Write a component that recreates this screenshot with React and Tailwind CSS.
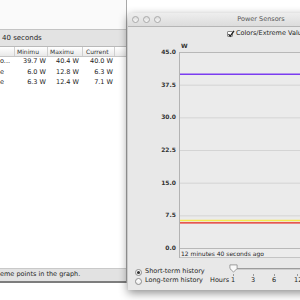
import React from "react";

const rows = [
  { name: "o...", min: "39.7 W", max: "40.4 W", cur: "40.0 W" },
  { name: "e", min: "6.0 W", max: "12.8 W", cur: "6.3 W" },
  { name: "e", min: "6.3 W", max: "12.4 W", cur: "7.1 W" },
];

const yLabels = ["45.0", "37.5", "30.0", "22.5", "15.0", "7.5", "0.0"];
const STEP = 196 / 6;

const BackWindow = () => {
  return (
    <div className="absolute left-0 top-0 w-[127px] h-[283px] flex flex-col bg-white border-r border-[#a8a8a8]">
      <div className="h-[30px] bg-[#fafafa] border-b border-[#c4c4c4]" />
      <div className="h-[17px] flex items-center pl-[2px] bg-[#e3e3e3] border-b border-[#b9b9b9] text-[7px]">
        40 seconds
      </div>
      <div className="h-[10px] flex items-center bg-gradient-to-b from-white to-[#e9e9e9] border-b border-[#c6c6c6] text-[6px] text-[#333]">
        <div className="w-[15px] h-full border-r border-[#cfcfcf]" />
        <div className="w-[33px] h-full pl-[2px] flex items-center border-r border-[#cfcfcf]">Minimu</div>
        <div className="w-[35px] h-full pl-[2px] flex items-center border-r border-[#cfcfcf]">Maximu</div>
        <div className="w-[32px] h-full pl-[3px] flex items-center border-r border-[#cfcfcf]">Current</div>
      </div>
      {rows.map((r, i) => (
        <div key={i} className="h-[10.5px] flex items-center text-[6.5px]">
          <div className="w-[15px]">{r.name}</div>
          <div className="w-[31px] text-right">{r.min}</div>
          <div className="w-[33px] text-right">{r.max}</div>
          <div className="w-[34px] text-right">{r.cur}</div>
        </div>
      ))}
      <div className="flex-1" />
      <div className="h-[13px] flex items-center bg-[#e2e2e2] border-t border-[#c9c9c9] text-[6.5px] whitespace-nowrap">
        eme points in the graph.
      </div>
      <div className="h-[2px] bg-[#7d7d7d]" />
    </div>
  );
};

const Chart = () => {
  const w = 214;
  const h = 197;
  const yOf = (v) => 196.5 - (v / 7.5) * STEP;
  return (
    <svg width={w} height={h} className="block">
      <rect x="0" y="0" width={w} height={h} fill="#ebebeb" />
      {[0, 1, 2, 3, 4, 5, 6].map((i) => (
        <line
          key={i}
          x1="0"
          x2={w}
          y1={i * STEP + 0.5}
          y2={i * STEP + 0.5}
          stroke={i === 0 || i === 6 ? "#b8b8b8" : "#d4d4d4"}
          strokeWidth="1"
        />
      ))}
      <line x1="0" x2={w} y1={yOf(40)} y2={yOf(40)} stroke="#7b3cf0" strokeWidth="1.6" />
      <line x1="0" x2={w} y1={yOf(6.3) - 0.6} y2={yOf(6.3) - 0.6} stroke="#f6e84e" strokeWidth="1.6" />
      <line x1="0" x2={w} y1={yOf(6.0) + 0.6} y2={yOf(6.0) + 0.6} stroke="#e5231b" strokeWidth="1.2" />
    </svg>
  );
};

const Radio = ({ checked, label }) => (
  <div className="flex items-center gap-[3px] h-[8px]">
    <span className="w-[7px] h-[7px] rounded-full bg-gradient-to-b from-white to-[#ececec] border border-[#8e8e8e] flex items-center justify-center">
      {checked && <span className="w-[3px] h-[3px] rounded-full bg-[#333]" />}
    </span>
    {label}
  </div>
);

const PowerSensors = () => {
  return (
    <div className="absolute left-[128px] top-[13px] w-[266px] h-[277px] flex flex-col bg-[#e8e8e8] rounded-t-[4px] shadow-[0_3px_10px_rgba(0,0,0,0.45)] overflow-hidden">
      <div className="relative h-[14px] shrink-0 flex items-center justify-center bg-gradient-to-b from-[#eeeeee] to-[#dcdcdc] border-b border-[#b5b5b5]">
        <div className="absolute left-[4px] top-[3px] flex gap-[4px]">
          <span className="w-[7px] h-[7px] rounded-full bg-gradient-to-b from-[#dcdcdc] to-[#f6f6f6] border border-[#a9a9a9]" />
          <span className="w-[7px] h-[7px] rounded-full bg-gradient-to-b from-[#dcdcdc] to-[#f6f6f6] border border-[#a9a9a9]" />
          <span className="w-[7px] h-[7px] rounded-full bg-gradient-to-b from-[#dcdcdc] to-[#f6f6f6] border border-[#a9a9a9]" />
        </div>
        <span className="text-[6.5px] text-[#555]">Power Sensors</span>
      </div>
      <div className="h-[14px] shrink-0 flex items-center pl-[99px] gap-[3px] text-[6.5px] whitespace-nowrap">
        <span className="relative w-[6px] h-[6px] bg-white border border-[#8a8a8a] rounded-[1px]">
          <svg viewBox="0 0 8 8" className="absolute -left-[1px] -top-[2px] w-[8px] h-[8px]">
            <path d="M1.5 4.2 L3.2 6.2 L7 0.8" fill="none" stroke="#222" strokeWidth="1.3" />
          </svg>
        </span>
        <span>Colors/Extreme Values</span>
      </div>
      <div className="flex pl-[53px] h-[11px] shrink-0 items-start pt-[2px]">
        <span className="text-[6px] font-bold leading-none text-[#333]">W</span>
      </div>
      <div className="flex shrink-0">
        <div className="w-[52px] relative h-[206px]">
          {yLabels.map((l, i) => (
            <span
              key={l}
              className="absolute right-[3px] text-[6px] font-bold text-[#333] leading-none"
              style={{ top: i * STEP - 3 }}
            >
              {l}
            </span>
          ))}
        </div>
        <div className="flex flex-col border-l border-[#b3b3b3]">
          <Chart />
          <div className="h-[9px] flex items-center pl-[1px] border-b border-[#c4c4c4] bg-[#ececec] text-[6px] whitespace-nowrap">
            12 minutes 40 seconds ago
          </div>
        </div>
      </div>
      <div className="flex items-start mt-[6px]">
        <div className="w-[82px] flex flex-col pl-[7px] pt-[4px] gap-[1px] text-[6.5px] whitespace-nowrap">
          <Radio checked label="Short-term history" />
          <Radio label="Long-term history" />
        </div>
        <div className="flex flex-col w-[180px]">
          <div className="relative h-[9px]">
            <div className="absolute left-[20px] right-0 top-[4px] h-[2px] bg-[#cdcdcd] border-t border-[#9c9c9c]" />
            <svg viewBox="0 0 10 10" className="absolute left-[19px] top-0 w-[9px] h-[9px]">
              <path d="M1 1 H9 V5 L5 9 L1 5 Z" fill="#fafafa" stroke="#8c8c8c" strokeWidth="0.9" />
            </svg>
          </div>
          <div className="relative h-[4px]">
            {[23, 43, 64, 87].map((x) => (
              <span key={x} className="absolute top-[1px] w-[1px] h-[2px] bg-[#9a9a9a]" style={{ left: x }} />
            ))}
          </div>
          <div className="relative h-[8px] flex items-center text-[6.5px]">
            <span className="absolute left-0">Hours</span>
            <span className="absolute left-[21px]">1</span>
            <span className="absolute left-[41px]">3</span>
            <span className="absolute left-[62px]">6</span>
            <span className="absolute left-[84px]">12</span>
          </div>
        </div>
      </div>
    </div>
  );
};

export default function App() {
  return (
    <div className="relative w-[300px] h-[300px] overflow-hidden bg-white font-['DejaVu_Sans',sans-serif] text-[#1e1e1e]">
      <BackWindow />
      <PowerSensors />
    </div>
  );
}
